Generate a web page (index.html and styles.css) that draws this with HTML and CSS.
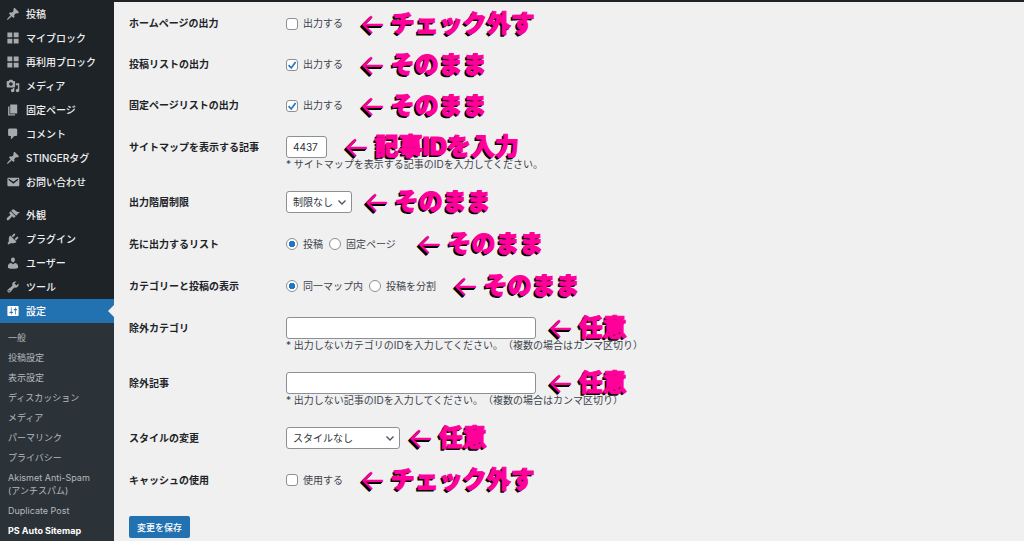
FILE: index.html
```html
<!DOCTYPE html>
<html lang="ja">
<head>
    <meta charset="UTF-8">
    <meta name="viewport" content="width=device-width, initial-scale=1.0">
    <title>PS Auto Sitemap</title>
    <link rel="stylesheet" href="styles.css">
</head>
<body>
    <div class="adminbar"></div>
    <div class="wrap">
        <nav class="sidebar">
            <ul class="menu">
                <li><a href="#"><svg viewBox="0 0 20 20"><path d="M10.44 3.02l1.82-1.82 6.36 6.35-1.83 1.82c-1.05-.68-2.48-.57-3.41.36l-.75.75c-.92.93-1.04 2.35-.35 3.41l-1.83 1.82-2.41-2.41-2.8 2.79c-.42.42-3.38 2.71-3.8 2.29s1.86-3.39 2.28-3.81l2.79-2.79L4.1 9.36l1.83-1.82c1.05.69 2.48.57 3.4-.36l.75-.75c.93-.92 1.05-2.35.36-3.41z"/></svg>投稿</a></li>
                <li><a href="#"><svg viewBox="0 0 20 20"><path d="M9 9V2H2v7h7zm9 0V2h-7v7h7zm-9 9v-7H2v7h7zm9 0v-7h-7v7h7z"/></svg>マイブロック</a></li>
                <li><a href="#"><svg viewBox="0 0 20 20"><path d="M9 9V2H2v7h7zm9 0V2h-7v7h7zm-9 9v-7H2v7h7zm9 0v-7h-7v7h7z"/></svg>再利用ブロック</a></li>
                <li><a href="#"><svg viewBox="0 0 20 20"><path d="M13 11V4c0-.55-.45-1-1-1h-1.67L9 1H5L3.67 3H2c-.55 0-1 .45-1 1v7c0 .55.45 1 1 1h10c.55 0 1-.45 1-1zM7 4.5c1.38 0 2.5 1.12 2.5 2.5S8.38 9.5 7 9.5 4.5 8.38 4.5 7 5.62 4.5 7 4.5zM14 6h5v10.5c0 1.38-1.12 2.5-2.5 2.5S14 17.88 14 16.5s1.12-2.5 2.5-2.5c.17 0 .34.02.5.05V9h-3V6zm-4 8.05V13h2v3.5c0 1.38-1.12 2.5-2.5 2.5S7 17.88 7 16.5 8.12 14 9.5 14c.17 0 .34.02.5.05z"/></svg>メディア</a></li>
                <li><a href="#"><svg viewBox="0 0 20 20"><path d="M6 15V2h10v13H6zm-1 1h8v2H3V5h2v11z"/></svg>固定ページ</a></li>
                <li><a href="#"><svg viewBox="0 0 20 20"><path d="M5 2h9c1.1 0 2 .9 2 2v7c0 1.1-.9 2-2 2h-2l-5 5v-5H5c-1.1 0-2-.9-2-2V4c0-1.1.9-2 2-2z"/></svg>コメント</a></li>
                <li><a href="#"><svg viewBox="0 0 20 20"><path d="M10.44 3.02l1.82-1.82 6.36 6.35-1.83 1.82c-1.05-.68-2.48-.57-3.41.36l-.75.75c-.92.93-1.04 2.35-.35 3.41l-1.83 1.82-2.41-2.41-2.8 2.79c-.42.42-3.38 2.71-3.8 2.29s1.86-3.39 2.28-3.81l2.79-2.79L4.1 9.36l1.83-1.82c1.05.69 2.48.57 3.4-.36l.75-.75c.93-.92 1.05-2.35.36-3.41z"/></svg>STINGERタグ</a></li>
                <li><a href="#"><svg viewBox="0 0 20 20"><path d="M3.87 4h13.25C18.37 4 19 4.59 19 5.79v8.42c0 1.19-.63 1.79-1.88 1.79H3.87c-1.25 0-1.88-.6-1.88-1.79V5.79c0-1.2.63-1.79 1.88-1.79zm6.62 8.6l6.74-5.53c.24-.2.43-.66.13-1.07-.29-.41-.82-.42-1.17-.17l-5.7 3.86L4.8 5.83c-.35-.25-.88-.24-1.17.17-.3.41-.11.87.13 1.07z"/></svg>お問い合わせ</a></li>
                <li class="separator"></li>
                <li><a href="#"><svg viewBox="0 0 20 20"><path d="M14.48 11.06L7.41 3.99l1.5-1.5c.5-.56 2.3-.47 3.51.32 1.21.8 1.43 1.28 2.91 2.1 1.18.64 2.45 1.26 4.45.85zm-.71.71L6.7 4.7 4.93 6.47c-.39.39-.39 1.02 0 1.41l1.06 1.06c.39.39.39 1.03 0 1.42-.6.6-1.43 1.11-2.21 1.69-.35.26-.7.53-1.01.84C1.43 14.23.4 16.08 1.4 17.07c.99 1 2.84-.03 4.18-1.36.31-.31.58-.66.85-1.02.57-.78 1.08-1.61 1.69-2.21.39-.39 1.02-.39 1.41 0l1.06 1.06c.39.39 1.02.39 1.41 0z"/></svg>外観</a></li>
                <li><a href="#"><svg viewBox="0 0 20 20"><path d="M13.11 4.36L9.87 7.6 8 5.73l3.24-3.24c.35-.34 1.05-.2 1.56.32.52.51.66 1.21.31 1.55zm-8 1.77l.91-1.12 9.01 9.01-1.19.84c-.71.71-2.63 1.16-3.82 1.16H6.14L4.9 17.26c-.59.59-1.54.59-2.12 0-.59-.58-.59-1.53 0-2.12l1.24-1.24v-3.88c0-1.13.4-3.19 1.09-3.89zm7.26 3.97l3.24-3.24c.34-.35 1.04-.21 1.55.31.52.51.66 1.21.31 1.55l-3.24 3.25z"/></svg>プラグイン</a></li>
                <li><a href="#"><svg viewBox="0 0 20 20"><path d="M10 9.25c-2.27 0-2.73-3.44-2.73-3.44C7 4.02 7.82 2 9.97 2c2.16 0 2.98 2.02 2.71 3.81 0 0-.41 3.44-2.68 3.44zm0 2.57L12.72 10c2.39 0 4.52 2.33 4.52 4.53v2.49s-3.65 1.13-7.24 1.13c-3.65 0-7.24-1.13-7.24-1.13v-2.49c0-2.25 1.94-4.48 4.47-4.48z"/></svg>ユーザー</a></li>
                <li><a href="#"><svg viewBox="0 0 20 20"><path d="M16.68 9.77c-1.34 1.34-3.3 1.67-4.95.99l-5.41 6.52c-.99.99-2.59.99-3.58 0s-.99-2.59 0-3.57l6.52-5.42c-.68-1.65-.35-3.61.99-4.95 1.28-1.28 3.12-1.62 4.72-1.06l-2.89 2.89 2.82 2.82 2.86-2.87c.53 1.58.18 3.39-1.08 4.65zM3.81 16.21c.4.39 1.04.39 1.43 0 .4-.4.4-1.04 0-1.43-.39-.4-1.03-.4-1.43 0-.39.39-.39 1.03 0 1.43z"/></svg>ツール</a></li>
                <li><a href="#" class="current"><svg viewBox="0 0 20 20"><path d="M18 16V4c0-.55-.45-1-1-1H3c-.55 0-1 .45-1 1v12c0 .55.45 1 1 1h14c.55 0 1-.45 1-1zM8 11h1c.55 0 1 .45 1 1s-.45 1-1 1H8v1.5c0 .28-.22.5-.5.5s-.5-.22-.5-.5V13H6c-.55 0-1-.45-1-1s.45-1 1-1h1V5.5c0-.28.22-.5.5-.5s.5.22.5.5V11zm5-2h-1c-.55 0-1-.45-1-1s.45-1 1-1h1V5.5c0-.28.22-.5.5-.5s.5.22.5.5V7h1c.55 0 1 .45 1 1s-.45 1-1 1h-1v5.5c0 .28-.22.5-.5.5s-.5-.22-.5-.5V9z"/></svg>設定</a></li>
            </ul>
            <ul class="submenu">
                <li><a href="#">一般</a></li>
                <li><a href="#">投稿設定</a></li>
                <li><a href="#">表示設定</a></li>
                <li><a href="#">ディスカッション</a></li>
                <li><a href="#">メディア</a></li>
                <li><a href="#">パーマリンク</a></li>
                <li><a href="#">プライバシー</a></li>
                <li><a href="#">Akismet Anti-Spam<br>(アンチスパム)</a></li>
                <li><a href="#">Duplicate Post</a></li>
                <li><a href="#" class="active">PS Auto Sitemap</a></li>
            </ul>
        </nav>
        <main class="content">
            <form>
                <div class="row">
                    <span class="title">ホームページの出力</span>
                    <div class="field check">
                        <label><input type="checkbox">出力する</label>
                        <span class="note"><span class="arrow">←</span>チェック外す</span>
                    </div>
                </div>
                <div class="row">
                    <span class="title">投稿リストの出力</span>
                    <div class="field check">
                        <label><input type="checkbox" checked>出力する</label>
                        <span class="note"><span class="arrow">←</span>そのまま</span>
                    </div>
                </div>
                <div class="row">
                    <span class="title">固定ページリストの出力</span>
                    <div class="field check">
                        <label><input type="checkbox" checked>出力する</label>
                        <span class="note"><span class="arrow">←</span>そのまま</span>
                    </div>
                </div>
                <div class="row">
                    <label class="title" for="postId">サイトマップを表示する記事</label>
                    <div class="field">
                        <input type="text" class="short" id="postId" value="4437">
                        <span class="note"><span class="arrow">←</span>記事IDを入力</span>
                    </div>
                    <p class="help">* サイトマップを表示する記事のIDを入力してください。</p>
                </div>
                <div class="row">
                    <label class="title" for="depth">出力階層制限</label>
                    <div class="field">
                        <select id="depth"><option>制限なし</option></select>
                        <span class="note near"><span class="arrow">←</span>そのまま</span>
                    </div>
                </div>
                <div class="row">
                    <span class="title">先に出力するリスト</span>
                    <div class="field">
                        <label><input type="radio" name="first" checked>投稿</label>
                        <label><input type="radio" name="first">固定ページ</label>
                        <span class="note far"><span class="arrow">←</span>そのまま</span>
                    </div>
                </div>
                <div class="row">
                    <span class="title">カテゴリーと投稿の表示</span>
                    <div class="field">
                        <label><input type="radio" name="map" checked>同一マップ内</label>
                        <label><input type="radio" name="map">投稿を分割</label>
                        <span class="note"><span class="arrow">←</span>そのまま</span>
                    </div>
                </div>
                <div class="row">
                    <label class="title" for="exCat">除外カテゴリ</label>
                    <div class="field">
                        <input type="text" class="long" id="exCat">
                        <span class="note near"><span class="arrow">←</span>任意</span>
                    </div>
                    <p class="help">* 出力しないカテゴリのIDを入力してください。（複数の場合はカンマ区切り）</p>
                </div>
                <div class="row">
                    <label class="title" for="exPost">除外記事</label>
                    <div class="field">
                        <input type="text" class="long" id="exPost">
                        <span class="note near"><span class="arrow">←</span>任意</span>
                    </div>
                    <p class="help">* 出力しない記事のIDを入力してください。（複数の場合はカンマ区切り）</p>
                </div>
                <div class="row">
                    <label class="title" for="style">スタイルの変更</label>
                    <div class="field">
                        <select id="style" class="wide"><option>スタイルなし</option></select>
                        <span class="note tight"><span class="arrow">←</span>任意</span>
                    </div>
                </div>
                <div class="row">
                    <span class="title">キャッシュの使用</span>
                    <div class="field">
                        <label><input type="checkbox">使用する</label>
                        <span class="note"><span class="arrow">←</span>チェック外す</span>
                    </div>
                </div>
                <button type="submit" class="save">変更を保存</button>
            </form>
        </main>
    </div>
</body>
</html>
```
FILE: styles.css
```css
* {
    box-sizing: border-box;
}
body {
    margin: 0;
    background: #f0f0f1;
    color: #3c434a;
    font-family: Inter, "Noto Sans CJK JP", sans-serif;
    font-size: 10px;
    line-height: 13px;
    text-spacing-trim: space-all;
}
.adminbar {
    height: 2px;
    background: #1d2327;
}
.wrap {
    display: flex;
}

/* left menu */
.sidebar {
    flex: none;
    width: 114px;
    background: #1d2327;
}
.menu, .submenu {
    margin: 0;
    padding: 0;
    list-style: none;
}
.menu a {
    position: relative;
    display: flex;
    align-items: center;
    gap: 6px;
    height: 24px;
    padding-left: 6px;
    color: #f0f0f1;
    font-weight: 500;
    text-decoration: none;
}
.menu svg {
    width: 14px;
    height: 14px;
    fill: #a7aaad;
}
.menu .separator {
    height: 9px;
}
.menu .current {
    background: #2271b1;
    color: #fff;
}
.menu .current svg {
    fill: #fff;
}
.menu .current::after {
    content: "";
    position: absolute;
    top: 6px;
    right: 0;
    border: 6px solid transparent;
    border-left-width: 0;
    border-right-color: #f0f0f1;
}
.submenu {
    padding: 4px 0 1px;
    background: #2c3338;
    font-size: 9px;
}
.submenu a {
    display: block;
    padding: 4px 8px 3px;
    color: #b4b9be;
    text-decoration: none;
}
.submenu .active {
    color: #fff;
    font-weight: 700;
}

/* settings form */
.content {
    flex: 1;
    padding: 1px 15px 0;
}
.row {
    display: grid;
    grid-template-columns: 157px 1fr;
    padding: 10px 0;
}
.title {
    align-self: center;
    color: #1d2327;
    font-weight: 700;
}
.field {
    display: flex;
    align-items: center;
    height: 22px;
}
.field.check {
    height: 21px;
}
.field label {
    display: flex;
    align-items: center;
    gap: 5px;
}
.field label + label {
    margin-left: 6px;
}
.help {
    grid-column: 2;
    margin: 0;
}
input, select {
    margin: 0;
    border: 1px solid #8c8f94;
    background-color: #fff;
    color: #2c3338;
    font: inherit;
}
input[type="text"], select {
    height: 22px;
    padding: 0 6px;
    border-radius: 3px;
}
input.short {
    width: 41px;
}
input.long {
    width: 250px;
}
select {
    width: 66px;
    appearance: none;
    background-image: url("data:image/svg+xml,%3Csvg xmlns='http://www.w3.org/2000/svg' viewBox='0 0 10 10'%3E%3Cpath d='M1.5 3.5L5 7l3.5-3.5' fill='none' stroke='%2350575e' stroke-width='1.4'/%3E%3C/svg%3E");
    background-repeat: no-repeat;
    background-position: right 4px center;
    background-size: 10px 10px;
}
select.wide {
    width: 114px;
}
input[type="checkbox"], input[type="radio"] {
    width: 12px;
    height: 12px;
    appearance: none;
    border-radius: 3px;
}
input[type="radio"] {
    border-radius: 50%;
}
input[type="checkbox"]:checked {
    background-image: url("data:image/svg+xml,%3Csvg xmlns='http://www.w3.org/2000/svg' viewBox='0 0 10 10'%3E%3Cpath d='M1.6 5.2L4.2 8L8.6 2' fill='none' stroke='%232276c4' stroke-width='1.7'/%3E%3C/svg%3E");
}
input[type="radio"]:checked {
    background-image: radial-gradient(circle, #2276c4 3px, #fff 3px);
}

/* pink notes beside each setting */
.note {
    display: flex;
    align-items: center;
    gap: 4px;
    margin-left: 16px;
    color: #ff0099;
    font-size: 24px;
    font-weight: 900;
    line-height: 24px;
    text-shadow: -1px 1px #000, -2px 2px #000;
    -webkit-text-stroke: 1px #ff0099;
    white-space: nowrap;
}
.note.tight {
    margin-left: 7px;
}
.note.near {
    margin-left: 11px;
}
.note.far {
    margin-left: 20px;
}
.arrow {
    font-size: 29px;
    font-weight: 400;
    -webkit-text-stroke: 0;
}
.save {
    display: block;
    height: 22px;
    margin-top: 15px;
    padding: 0 8px;
    border: 0;
    border-radius: 2px;
    background: #2271b1;
    color: #fff;
    font: inherit;
    font-size: 9px;
    font-weight: 500;
}
```
